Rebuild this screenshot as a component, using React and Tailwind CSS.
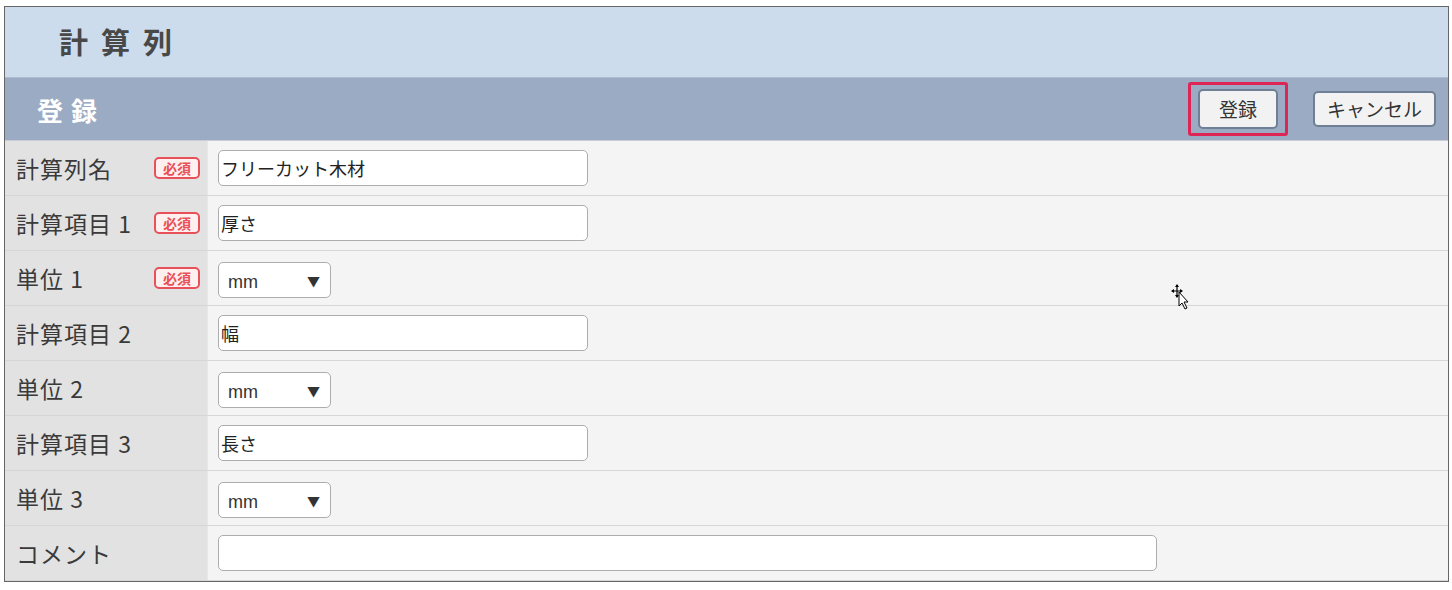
import React from "react";

const rows = [
  { label: "計算列名", required: true, type: "text", value: "フリーカット木材" },
  { label: "計算項目 1", required: true, type: "text", value: "厚さ" },
  { label: "単位 1", required: true, type: "select", value: "mm" },
  { label: "計算項目 2", type: "text", value: "幅" },
  { label: "単位 2", type: "select", value: "mm" },
  { label: "計算項目 3", type: "text", value: "長さ" },
  { label: "単位 3", type: "select", value: "mm" },
  { label: "コメント", type: "wide", value: "" },
];

const font = { fontFamily: '"Noto Sans CJK JP", "Noto Sans", sans-serif' };

const MoveCursor = () => (
  <svg width="22" height="28" viewBox="0 0 22 28" className="absolute left-[1168px] top-[284px]">
    <path d="M9 1 L9 13 M4 7 L14 7" stroke="#000" strokeWidth="1.2" fill="none" />
    <path d="M9 0 L11 3 L7 3 Z M9 14 L11 11 L7 11 Z M3 7 L6 5 L6 9 Z M15 7 L12 5 L12 9 Z" fill="#000" />
    <path d="M11 8 L11 22 L14 19 L17 25 L19 24 L16 18 L20 18 Z" fill="#fff" stroke="#000" strokeWidth="1" />
  </svg>
);

const Field = ({ row }) => {
  if (row.type === "select") {
    return (
      <div className="mt-[4px] flex h-[36px] w-[113px] items-center justify-between rounded-[5px] border border-[#adadad] bg-white pl-[9px] pr-[10px] text-[18px] text-[#333]">
        <span className="pt-[4px] leading-none" style={{ fontFamily: '"Liberation Sans", Arial, sans-serif' }}>mm</span>
        <span className="text-[13px] leading-none">▼</span>
      </div>
    );
  }
  return (
    <div
      className={`flex h-[36px] items-center rounded-[5px] border border-[#adadad] bg-white pl-[2px] text-[18px] text-[#222] ${
        row.type === "wide" ? "w-[939px]" : "w-[370px]"
      }`}
    >
      {row.value}
    </div>
  );
};

export default function App() {
  return (
    <div className="relative min-h-[590px] bg-white pl-[4px] pt-[6px]" style={font}>
      <div className="w-[1445px] border border-[#666]">
        {/* Page title */}
        <div className="flex h-[71px] items-center border-b border-[#aebcce] bg-[#cddcec] pl-[54px]">
          <h1 className="text-[29px] font-bold tracking-[13px] text-[#484848]">計算列</h1>
        </div>

        {/* Action bar */}
        <div className="flex h-[63px] items-center justify-between border-b border-[#c9ced6] bg-[#9aabc3] pl-[32px] pr-[12px]">
          <h2 className="text-[26px] font-bold tracking-[8px] text-white">登録</h2>
          <div className="flex items-center gap-[25px]">
            <div className="rounded-[3px] border-[3px] border-[#df2456] px-[7px] py-[4px]">
              <button className="h-[40px] w-[80px] rounded-[5px] border-2 border-[#6f7f95] bg-[#f2f2f2] text-[19px] text-[#333]">
                登録
              </button>
            </div>
            <button className="h-[36px] w-[123px] rounded-[5px] border-2 border-[#6f7f95] bg-[#f2f2f2] text-[19px] text-[#333]">
              キャンセル
            </button>
          </div>
        </div>

        {/* Form rows */}
        {rows.map((row, i) => (
          <div key={i} className="flex h-[55px] border-b border-[#d6d6d6]">
            <div className="flex w-[203px] items-center justify-between border-r border-[#e8e8e8] bg-[#e2e2e2] pl-[11px] pr-[7px]">
              <span className="text-[23px] tracking-[1px] text-[#3a3a3a]">{row.label}</span>
              {row.required && (
                <span className="flex h-[22px] w-[46px] items-center justify-center rounded-[5px] border-2 border-[#e8505a] bg-[#fff0f0] text-[14px] font-bold leading-none text-[#e8505a]">
                  必須
                </span>
              )}
            </div>
            <div className="flex flex-1 items-center bg-[#f4f4f4] pl-[10px]">
              <Field row={row} />
            </div>
          </div>
        ))}
      </div>
      <MoveCursor />
    </div>
  );
}
